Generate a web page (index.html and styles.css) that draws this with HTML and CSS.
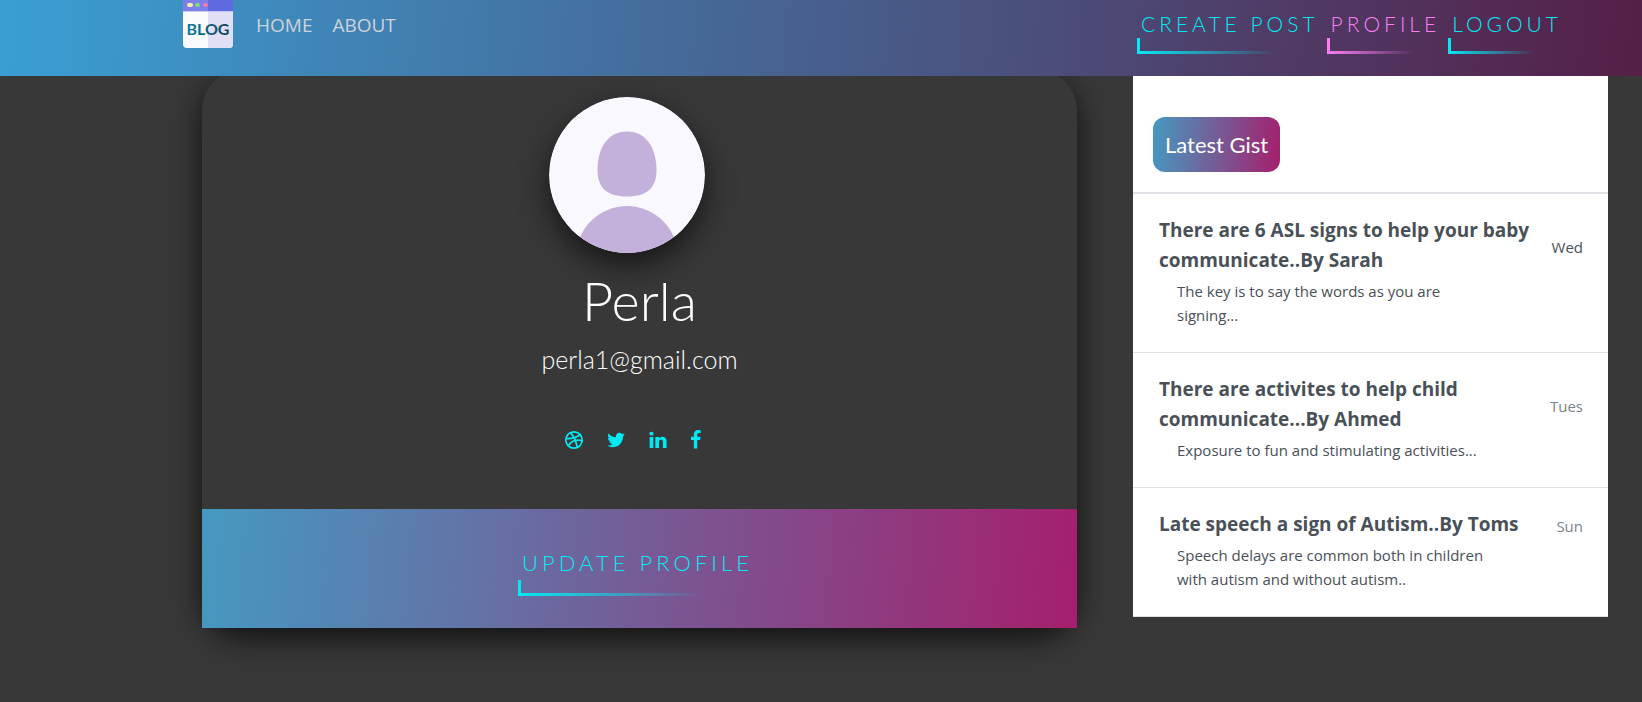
FILE: index.html
```html
<!DOCTYPE html>
<html lang="en">
<head>
<meta charset="utf-8">
<meta name="viewport" content="width=device-width, initial-scale=1">
<title>Blog - Profile</title>
<link rel="stylesheet" href="styles.css">
</head>
<body>
<header class="navbar">
  <a class="logo" href="#" aria-label="Blog">
    <svg width="50" height="48" viewBox="0 0 50 48">
      <path d="M0 0H50V44a4 4 0 0 1-4 4H4a4 4 0 0 1-4-4Z" fill="#f9fafb"/>
      <path d="M25 0H50V44a4 4 0 0 1-4 4H25Z" fill="#e1dff5"/>
      <path d="M0 0H25V11H0Z" fill="#7d7fe8"/>
      <path d="M25 0H50V11H25Z" fill="#5f69e0"/>
      <path d="M0 11H50V12H0Z" fill="#c9c8f3"/>
      <rect x="4" y="3" width="6" height="4" rx="2" fill="#faf39a"/>
      <rect x="12" y="3" width="5" height="4" rx="2" fill="#7fdc79"/>
      <rect x="20" y="3" width="5" height="4" rx="2" fill="#f37ba8"/>
      <defs><linearGradient id="ink"><stop offset="0" stop-color="#07809f"/><stop offset="1" stop-color="#123f50"/></linearGradient></defs>
      <text class="logo-text" x="25" y="35" text-anchor="middle" fill="url(#ink)">BLOG</text>
    </svg>
  </a>
  <nav class="site-links">
    <a href="#">HOME</a>
    <a href="#">ABOUT</a>
  </nav>
  <nav class="account-links">
    <a class="corner-link" href="#">CREATE POST</a>
    <a class="corner-link current" href="#">PROFILE</a>
    <a class="corner-link" href="#">LOGOUT</a>
  </nav>
</header>

<main class="page">
  <section class="profile">
    <div class="profile-body">
      <svg class="avatar" viewBox="0 0 156 156" role="img" aria-label="Profile picture">
        <defs><clipPath id="round"><circle cx="78" cy="78" r="78"/></clipPath></defs>
        <circle cx="78" cy="78" r="78" fill="#faf8ff"/>
        <g clip-path="url(#round)" fill="#c3b1dc">
          <path d="M78 34.500C98 34.500 107.500 52 107.500 73C107.500 91 98 99.500 78 99.500S48.500 91 48.500 73C48.500 52 58 34.500 78 34.500Z"/>
          <circle cx="78" cy="160" r="51"/>
        </g>
      </svg>
      <h1 class="name">Perla</h1>
      <p class="email">perla1@gmail.com</p>
      <div class="social">
        <a href="#" aria-label="Dribbble"><svg width="20" height="20" viewBox="0 0 20 20" fill="none" stroke="currentColor" stroke-width="1.700"><circle cx="10" cy="10" r="8.200"/><path d="M6.600 2.600C9.500 6 12 10.500 13.300 17.500M2 8.600C7.500 8.800 12.800 7.800 16 4.400M4.400 16C7 11.300 12 9.200 18 10.600"/></svg></a>
        <a href="#" aria-label="Twitter"><svg width="20" height="20" viewBox="0 0 1792 1792" fill="currentColor"><path d="M1684 408q-67 98-162 167 1 14 1 42 0 130-38 259.500t-115.500 248.500-184.500 210.500-258 146-323 54.500q-271 0-496-145 35 4 78 4 225 0 401-138-105-2-188-64.500t-114-159.500q33 5 61 5 43 0 85-11-112-23-185.500-111.500t-73.500-205.500v-4q68 38 146 41-66-44-105-115t-39-154q0-88 44-163 121 149 294.500 238.500t371.500 99.500q-8-38-8-74 0-134 94.500-228.500t228.500-94.500q140 0 236 102 109-21 205-78-37 115-142 178 93-10 186-50z"/></svg></a>
        <a href="#" aria-label="LinkedIn"><svg width="20" height="20" viewBox="0 0 1792 1792" fill="currentColor"><path d="M477 625v991h-330v-991h330zm21-306q1 73-50.500 122t-135.500 49h-2q-82 0-132-49t-50-122q0-74 51.500-122.500t134.500-48.500 133 48.500 51 122.500zm1166 729v568h-329v-530q0-105-40.500-164.500t-126.500-59.500q-63 0-105.500 34.500t-63.500 85.500q-11 30-11 81v553h-329q2-399 2-647t-1-296l-1-48h329v144h-2q20-32 41-56t56.500-52 87-43.500 114.500-15.500q171 0 275 113.500t104 332.500z"/></svg></a>
        <a href="#" aria-label="Facebook"><svg width="12" height="20" viewBox="390 0 1075 1792" fill="currentColor"><path d="M1343 12v264h-157q-86 0-116 36t-30 108v189h293l-39 296h-254v759h-306v-759h-255v-296h255v-218q0-186 104-288.500t277-102.500q147 0 228 12z"/></svg></a>
      </div>
    </div>
    <div class="profile-footer">
      <a class="corner-link large" href="#">UPDATE PROFILE</a>
    </div>
  </section>

  <aside class="gists">
    <header class="gists-head"><h2 class="badge">Latest Gist</h2></header>
    <article class="gist">
      <div class="gist-top"><h3>There are 6 ASL signs to help your baby communicate..By Sarah</h3><span class="day strong">Wed</span></div>
      <p>The key is to say the words as you are signing...</p>
    </article>
    <article class="gist">
      <div class="gist-top"><h3>There are activites to help child communicate...By Ahmed</h3><span class="day">Tues</span></div>
      <p>Exposure to fun and stimulating activities...</p>
    </article>
    <article class="gist">
      <div class="gist-top"><h3>Late speech a sign of Autism..By Toms</h3><span class="day">Sun</span></div>
      <p>Speech delays are common both in children with autism and without autism..</p>
    </article>
  </aside>
</main>
</body>
</html>
```
FILE: styles.css
```css
:root {
  --cyan: #03e9f4;
  --pink: #fb7ef5;
  --blend: linear-gradient(95deg, #4599c1, #a51f6c);
}
* { box-sizing: border-box; }
body {
  margin: 0;
  background: #383838;
  color: #fff;
  font-family: "Open Sans", "Noto Sans", sans-serif;
  font-size: 15px;
}
a { color: inherit; text-decoration: none; }
h1, h2, h3, p { margin: 0; }

.navbar {
  position: relative;
  z-index: 1;
  display: flex;
  align-items: flex-start;
  height: 76px;
  padding: 0 80px 0 183px;
  background: linear-gradient(95deg, #3a9fd3, #551f47);
}
.logo { display: flex; }
.logo-text { font: 700 16px Lato, sans-serif; }
.site-links {
  display: flex;
  gap: 20px;
  margin: 10px auto 0 23px;
  font-size: 19px;
  line-height: 30px;
  color: #ccd3da;
}
.account-links {
  display: flex;
  gap: 8px;
  padding-top: 8px;
}
.corner-link {
  --tint: var(--cyan);
  padding: 0 0 14px 4px;
  font: 300 21px/32px Lato, sans-serif;
  letter-spacing: 4px;
  color: var(--tint);
  background:
    linear-gradient(var(--tint), var(--tint)) left bottom / 3px 16px no-repeat,
    linear-gradient(90deg, var(--tint), transparent) left bottom / 76% 3px no-repeat;
}
.corner-link.current { --tint: var(--pink); }
.corner-link.large {
  padding-right: 8px;
  font-size: 22px;
}

.page {
  display: grid;
  grid-template-columns: 875fr 475fr;
  gap: 56px;
  align-items: start;
  margin-top: -6px;
  padding: 0 34px 60px 202px;
}
.profile {
  border-radius: 40px;
  box-shadow: 0 10px 30px rgba(0, 0, 0, .7);
}
.profile-body {
  display: flex;
  flex-direction: column;
  align-items: center;
  padding: 27px 0 59px;
}
.avatar {
  width: 156px;
  margin-right: 25px;
  border-radius: 50%;
  box-shadow: 0 12px 30px rgba(0, 0, 0, .6);
}
.name { margin-top: 14px; font: 300 54px/68px Lato, sans-serif; }
.email { margin-top: 7px; font: 300 25px/34px Lato, sans-serif; }
.social {
  display: flex;
  gap: 22px;
  margin: 54px 14px 0 0;
  color: var(--cyan);
}
.social a { display: flex; }
.profile-footer {
  display: flex;
  justify-content: center;
  padding: 38px 0 32px;
  background: var(--blend);
}
.profile-footer .corner-link { padding-bottom: 17px; }

.gists { background: #fff; color: #495057; }
.gists-head { padding: 47px 20px 20px; border-bottom: 2px solid #dee2e6; }
.badge {
  width: fit-content;
  padding: 12px;
  border-radius: 12px;
  background: var(--blend);
  color: #fff;
  font: 400 22px/31px Lato, sans-serif;
}
.gist { padding: 21px 25px 25px 26px; border-bottom: 1px solid #dee2e6; }
.gist-top {
  display: flex;
  justify-content: space-between;
  align-items: center;
}
.gist h3 { font-size: 19px; line-height: 30px; font-weight: 700; }
.gist p { margin: 4px 86px 0 18px; line-height: 24px; }
.day { margin-left: 20px; padding-top: 3px; line-height: 24px; color: #7b838a; }
.day.strong { color: #495057; }
```
